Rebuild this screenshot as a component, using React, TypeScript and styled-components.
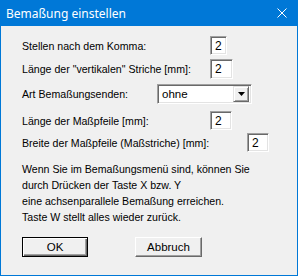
import styled, { createGlobalStyle } from "styled-components";

const GlobalStyle = createGlobalStyle`
  html, body {
    margin: 0;
    padding: 0;
    background: #ffffff;
  }
`;

const Window = styled.div`
  width: 298px;
  height: 276px;
  box-sizing: border-box;
  border: 1px solid #0078d7; /* Win10 accent */
  border-top: none;
  background: #f0f0f0;
  display: flex;
  flex-direction: column;
  font-family: "Liberation Sans", Arial, sans-serif;
  font-size: 10.6px;
  color: #000;
`;

const TitleBar = styled.div`
  height: 26px;
  margin: 0 -1px;
  background: #0078d7;
  display: flex;
  align-items: center;
  justify-content: space-between;
  padding: 0 11px 0 6px;
  color: #fff;
  font-family: "Noto Sans", "Open Sans", sans-serif;
  font-size: 12px;
  flex-shrink: 0;
`;

const Body = styled.div`
  display: flex;
  flex-direction: column;
  padding-left: 21px;
`;

const Row = styled.div<{ $top: number }>`
  display: flex;
  align-items: center;
  margin-top: ${(p) => p.$top}px;
`;

const Label = styled.span<{ $width: number }>`
  width: ${(p) => p.$width}px;
  white-space: nowrap;
  flex-shrink: 0;
`;

const NumberBox = styled.div<{ $w: number; $h: number }>`
  width: ${(p) => p.$w}px;
  height: ${(p) => p.$h}px;
  box-sizing: border-box;
  background: #fff;
  border: 1px solid;
  border-color: #a0a0a0 #ffffff #ffffff #a0a0a0;
  box-shadow: inset 1px 1px 0 #696969, inset -1px -1px 0 #e3e3e3;
  padding-left: 4px;
  display: flex;
  align-items: center;
  font-size: 12px;
`;

const Select = styled.div`
  width: 95px;
  height: 20px;
  box-sizing: border-box;
  background: #fff;
  border: 1px solid;
  border-color: #a0a0a0 #ffffff #ffffff #a0a0a0;
  box-shadow: inset 1px 1px 0 #696969, inset -1px -1px 0 #e3e3e3;
  display: flex;
  align-items: center;
  justify-content: space-between;
  padding: 2px 2px 2px 4px;
  font-size: 11.5px;
`;

const ArrowButton = styled.div`
  width: 16px;
  height: 16px;
  box-sizing: border-box;
  background: #f0f0f0;
  border: 1px solid;
  border-color: #e3e3e3 #696969 #696969 #e3e3e3;
  box-shadow: inset 1px 1px 0 #ffffff, inset -1px -1px 0 #a0a0a0;
  display: flex;
  align-items: center;
  justify-content: center;
`;

const Paragraph = styled.p`
  margin: 9px 0 0 0;
  line-height: 16px;
`;

const ButtonRow = styled.div`
  display: flex;
  gap: 47px;
  margin-top: 12px;
`;

const Button = styled.div<{ $default?: boolean; $w: number }>`
  width: ${(p) => p.$w}px;
  height: 20px;
  box-sizing: border-box;
  background: #f0f0f0;
  display: flex;
  align-items: center;
  justify-content: center;
  font-size: 11.5px;
  border: 1px solid;
  border-color: ${(p) =>
    p.$default ? "#000" : "#ffffff #696969 #696969 #ffffff"};
  box-shadow: ${(p) =>
    p.$default
      ? "inset 1px 1px 0 #ffffff, inset -1px -1px 0 #696969, inset -2px -2px 0 #a0a0a0"
      : "inset -1px -1px 0 #a0a0a0"};
`;

export default function App() {
  return (
    <>
      <GlobalStyle />
      <Window>
        <TitleBar>
          <span>Bemaßung einstellen</span>
          <svg width="10" height="10" viewBox="0 0 10 10">
            <path d="M0.5 0.5 L9.5 9.5 M9.5 0.5 L0.5 9.5" stroke="#fff" strokeWidth="1" />
          </svg>
        </TitleBar>
        <Body>
          <Row $top={10}>
            <Label $width={188}>Stellen nach dem Komma:</Label>
            <NumberBox $w={17} $h={19}>2</NumberBox>
          </Row>
          <Row $top={4}>
            <Label $width={188}>Länge der "vertikalen" Striche [mm]:</Label>
            <NumberBox $w={23} $h={20}>2</NumberBox>
          </Row>
          <Row $top={5}>
            <Label $width={135}>Art Bemaßungsenden:</Label>
            <Select>
              <span>ohne</span>
              <ArrowButton>
                <svg width="7" height="4" viewBox="0 0 7 4">
                  <path d="M0 0 H7 L3.5 4 Z" fill="#000" />
                </svg>
              </ArrowButton>
            </Select>
          </Row>
          <Row $top={7}>
            <Label $width={188}>Länge der Maßpfeile [mm]:</Label>
            <NumberBox $w={22} $h={19}>2</NumberBox>
          </Row>
          <Row $top={3}>
            <Label $width={225}>Breite der Maßpfeile (Maßstriche) [mm]:</Label>
            <NumberBox $w={22} $h={19}>2</NumberBox>
          </Row>
          <Paragraph>
            Wenn Sie im Bemaßungsmenü sind, können Sie
            <br />
            durch Drücken der Taste X bzw. Y
            <br />
            eine achsenparallele Bemaßung erreichen.
            <br />
            Taste W stellt alles wieder zurück.
          </Paragraph>
          <ButtonRow>
            <Button $default $w={66}>OK</Button>
            <Button $w={67}>Abbruch</Button>
          </ButtonRow>
        </Body>
      </Window>
    </>
  );
}
